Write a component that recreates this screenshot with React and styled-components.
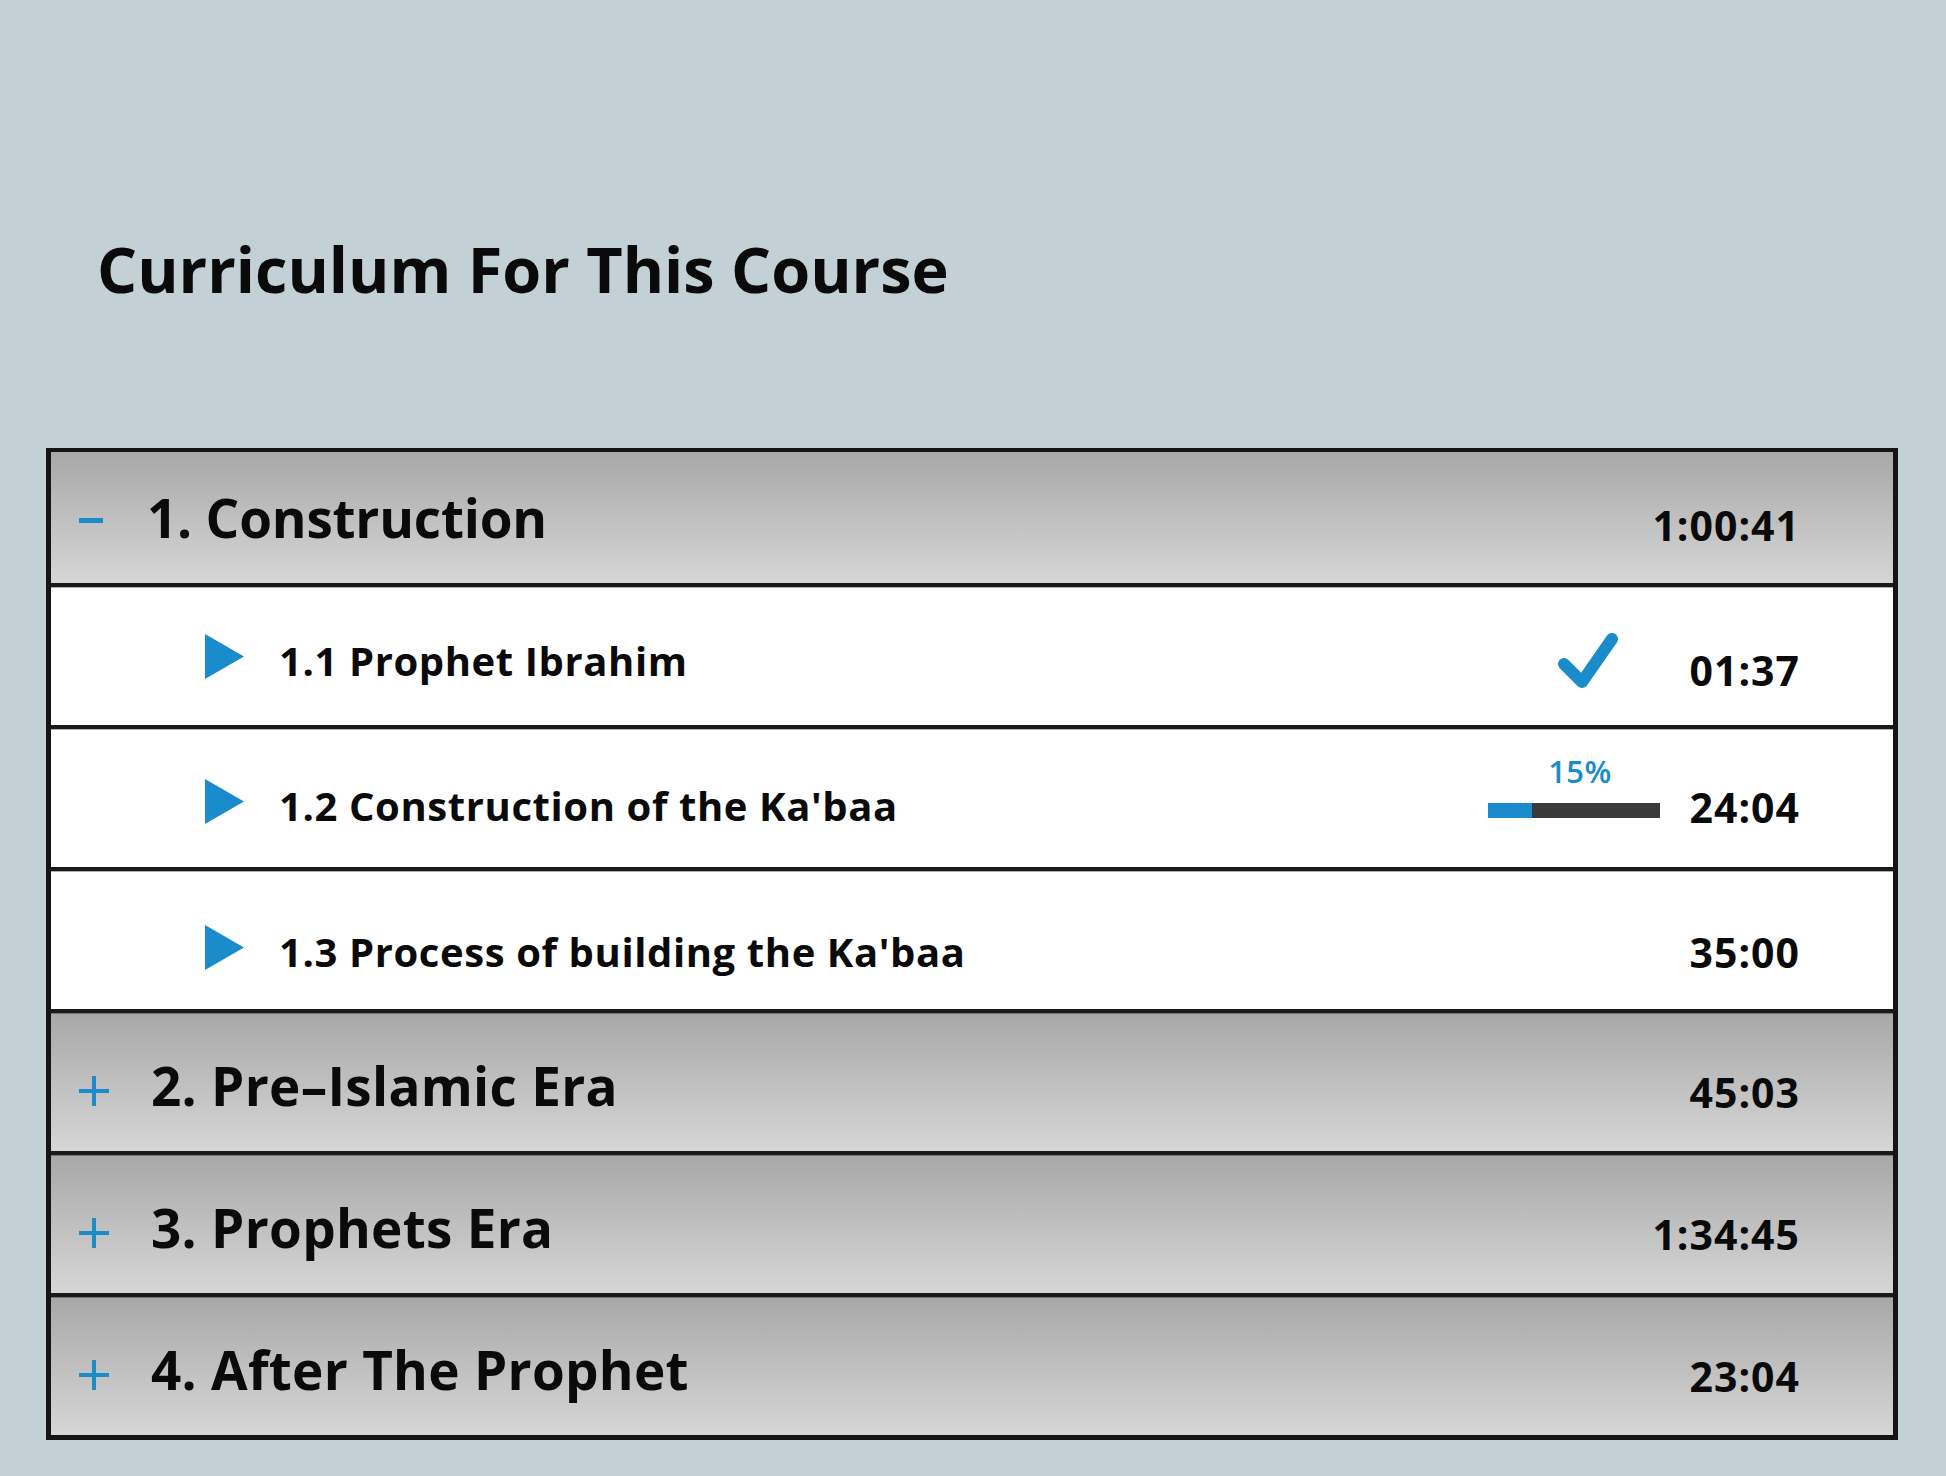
import React from "react";
import styled, { createGlobalStyle } from "styled-components";

const Global = createGlobalStyle`
  html, body { margin: 0; padding: 0; }
  body {
    background: #c3d0d6;
    font-family: "Open Sans", "Noto Sans", sans-serif;
    color: #0a0a0a;
  }
`;

const Page = styled.div`
  width: 1946px;
  min-height: 1476px;
  box-sizing: border-box;
  padding: 229px 0 0 46px;
`;

const Title = styled.h1`
  margin: 0 0 139px 51px;
  font-size: 63px;
  line-height: 80px;
  font-weight: 700;
  letter-spacing: 0px;
`;

const Table = styled.div`
  width: 1852px;
  box-sizing: border-box;
  border: 5px solid #151515;
  border-top-width: 4px;
  display: flex;
  flex-direction: column;
`;

const Row = styled.div`
  height: ${(p) => p.$h || 138}px;
  display: flex;
  align-items: center;
  box-sizing: content-box;
  border-top: ${(p) => (p.$first ? "0" : "4px solid #1a1a1a")};
  box-shadow: ${(p) => (p.$first ? "none" : "inset 0 1px 0 rgba(0,0,0,0.3)")};
  background: ${(p) =>
    p.$section
      ? "linear-gradient(to bottom, #a8a8a8 0%, #bdbdbd 45%, #d6d6d6 100%)"
      : "#ffffff"};
  padding: ${(p) => (p.$section ? "0 0 0 28px" : "0 0 0 154px")};
`;

const IconBox = styled.div`
  width: ${(p) => p.$w}px;
  flex: none;
  display: flex;
  align-items: center;
  padding-top: ${(p) => p.$pt || 0}px;
`;

const SectionName = styled.div`
  flex: 1;
  font-size: 53px;
  font-weight: 700;
  letter-spacing: ${(p) => (p.$tight ? -0.2 : 0.3)}px;
  line-height: 1;
  padding-top: ${(p) => p.$pt || 0}px;
  white-space: nowrap;
`;

const LessonName = styled.div`
  flex: 1;
  font-size: 40px;
  font-weight: 700;
  letter-spacing: 0.6px;
  line-height: 1;
  padding-top: ${(p) => p.$pt || 0}px;
  white-space: nowrap;
`;

const Status = styled.div`
  width: 172px;
  flex: none;
  align-self: stretch;
  box-sizing: border-box;
  display: flex;
  flex-direction: column;
  align-items: center;
  justify-content: ${(p) => (p.$top ? "flex-start" : "center")};
  padding-top: ${(p) => p.$pt || 0}px;
`;

const Time = styled.div`
  width: 140px;
  flex: none;
  margin-right: 93px;
  display: flex;
  justify-content: flex-end;
  white-space: nowrap;
  font-size: 41px;
  font-weight: 700;
  line-height: 1;
  padding-top: ${(p) => p.$pt || 0}px;
  letter-spacing: 1px;
`;

const Minus = styled.span`
  display: block;
  width: 24px;
  height: 5px;
  background: #1a8bcb;
`;

const Plus = styled.span`
  display: block;
  position: relative;
  width: 30px;
  height: 30px;
  &::before, &::after {
    content: "";
    position: absolute;
    background: #1a8bcb;
  }
  &::before { left: 0; right: 0; top: 13px; height: 4px; }
  &::after { top: 0; bottom: 0; left: 13px; width: 4px; }
`;

const Percent = styled.div`
  font-size: 31px;
  font-weight: 600;
  color: #1a8bcb;
  line-height: 1;
  margin-bottom: 16px;
  margin-left: 12px;
  letter-spacing: 0.5px;
`;

const Bar = styled.div`
  width: 172px;
  height: 15px;
  background: #3a3a3a;
  display: flex;
`;

const BarFill = styled.div`
  height: 100%;
  background: #1a8bcb;
`;

const Play = () => (
  <svg width="39" height="45" viewBox="0 0 39 45">
    <polygon points="0,0 39,22.5 0,45" fill="#1a8bcb" />
  </svg>
);

const Check = () => (
  <svg width="62" height="60" viewBox="0 0 62 60" style={{ marginLeft: 28 }}>
    <polyline
      points="7,33 25,51 55,8"
      fill="none"
      stroke="#1a8bcb"
      strokeWidth="12"
      strokeLinecap="round"
      strokeLinejoin="round"
    />
  </svg>
);

const sections = [
  { n: "2. Pre–Islamic Era", t: "45:03" },
  { n: "3. Prophets Era", t: "1:34:45" },
  { n: "4. After The Prophet", t: "23:04" },
];

export default function App() {
  return (
    <Page>
      <Global />
      <Title>Curriculum For This Course</Title>
      <Table>
        <Row $section $first $h={131}>
          <IconBox $w={68} $pt={5}>
            <Minus />
          </IconBox>
          <SectionName $tight>1. Construction</SectionName>
          <Time $pt={16}>1:00:41</Time>
        </Row>
        <Row>
          <IconBox $w={74}>
            <Play />
          </IconBox>
          <LessonName $pt={10}>1.1 Prophet Ibrahim</LessonName>
          <Status $pt={10}>
            <Check />
          </Status>
          <Time $pt={29}>01:37</Time>
        </Row>
        <Row>
          <IconBox $w={74} $pt={6}>
            <Play />
          </IconBox>
          <LessonName $pt={16}>1.2 Construction of the Ka'baa</LessonName>
          <Status $top $pt={27}>
            <Percent>15%</Percent>
            <Bar>
              <BarFill style={{ width: "25.6%" }} />
            </Bar>
          </Status>
          <Time $pt={19}>24:04</Time>
        </Row>
        <Row>
          <IconBox $w={74} $pt={14}>
            <Play />
          </IconBox>
          <LessonName $pt={24}>1.3 Process of building the Ka'baa</LessonName>
          <Time $pt={25}>35:00</Time>
        </Row>
        {sections.map((s) => (
          <Row $section key={s.n}>
            <IconBox $w={72} $pt={18}>
              <Plus />
            </IconBox>
            <SectionName $pt={7}>{s.n}</SectionName>
            <Time $pt={21}>{s.t}</Time>
          </Row>
        ))}
      </Table>
    </Page>
  );
}
